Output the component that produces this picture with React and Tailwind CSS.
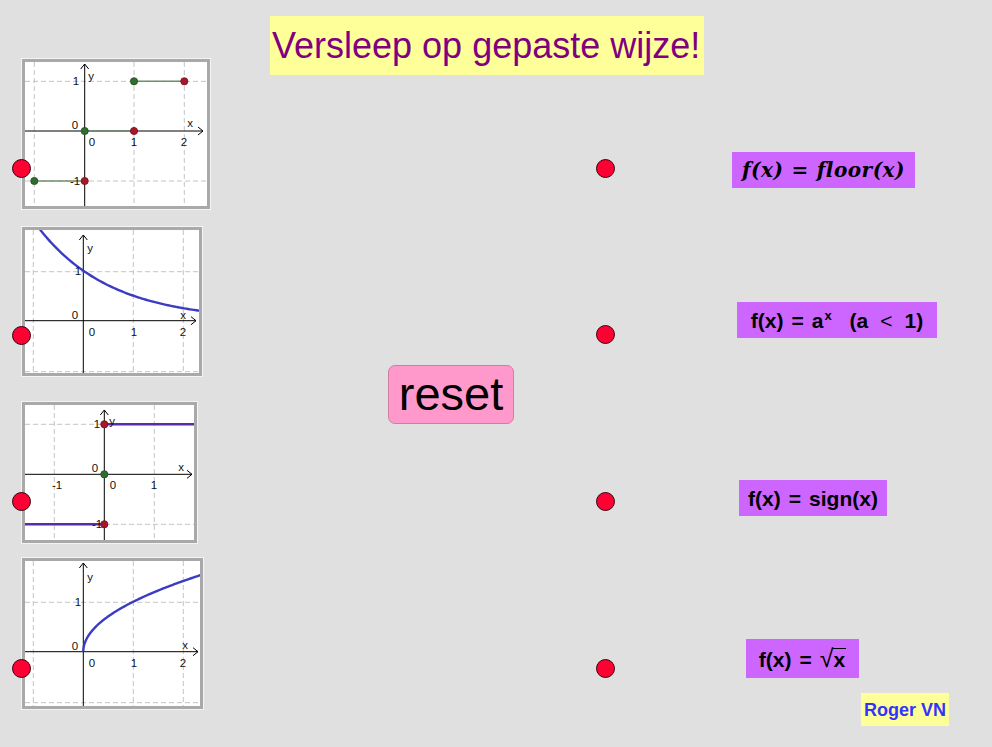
const Graph = ({ x, y, w, h, dotTop, className = '', children }) => (
    <div className={`relative ${className}`}>
        <div
            className="border-[3px] border-[#a9a9a9] bg-white shadow-[0_0_0_1px_#f4f4f4]"
            style={{ width: w, height: h }}
        >
            <svg
                width={w - 6}
                height={h - 6}
                viewBox={`${x + 3} ${y + 3} ${w - 6} ${h - 6}`}
                className="block"
                fontFamily="Liberation Sans, Arial, sans-serif"
                fontSize="11.5"
            >
                {children}
            </svg>
        </div>
        <div className="absolute -left-[10.5px]" style={{ top: dotTop }}>
            <BigDot />
        </div>
    </div>
);

const Grid = ({ xs, ys, x0, x1, y0, y1 }) => (
    <g stroke="#c4c4c4" strokeWidth="1" strokeDasharray="5 3">
        {xs.map((v) => (
            <line key={'v' + v} x1={v} y1={y0} x2={v} y2={y1} />
        ))}
        {ys.map((v) => (
            <line key={'h' + v} x1={x0} y1={v} x2={x1} y2={v} />
        ))}
    </g>
);

const Axes = ({ ox, oy, x0, x1, y0, y1 }) => (
    <g stroke="#000" strokeWidth="1" fill="none">
        <line x1={x0} y1={oy} x2={x1} y2={oy} />
        <line x1={ox} y1={y0} x2={ox} y2={y1} />
        <path d={`M${x1 - 5} ${oy - 4} L${x1} ${oy} L${x1 - 5} ${oy + 4}`} />
        <path d={`M${ox - 4} ${y0 + 5} L${ox} ${y0} L${ox + 4} ${y0 + 5}`} />
    </g>
);

const Dot = ({ cx, cy, c }) => (
    <circle
        cx={cx}
        cy={cy}
        r="3.6"
        fill={c === 'g' ? '#2f6e2f' : '#a8182c'}
        stroke={c === 'g' ? '#1f4a1f' : '#6e0f1c'}
        strokeWidth="0.8"
    />
);

const BigDot = () => <div className="w-[19px] h-[19px] rounded-full bg-[#ff0033] border border-[#3a0010]" />;

const Lbl = ({ x, y, t }) => (
    <text x={x} y={y} fill="#111" textAnchor="middle">
        {t}
    </text>
);

const expPath = () => {
    let d = '';
    for (let px = 40; px <= 200; px += 2) {
        const xv = (px - 83.3) / 50;
        const yv = 320.7 - 50 * Math.pow(0.5, xv);
        d += (d ? ' L' : 'M') + px + ' ' + yv.toFixed(2);
    }
    return d;
};

const sqrtPath = () => {
    let d = 'M83.3 651.7';
    for (let i = 1; i <= 120; i++) {
        const xv = (i / 120) * (i / 120) * 2.35;
        const px = 83.3 + xv * 50;
        const yv = 651.7 - 50 * Math.sqrt(xv);
        d += ' L' + px.toFixed(2) + ' ' + yv.toFixed(2);
    }
    return d;
};

const Formula = ({ className, children }) => (
    <div className={`bg-[#cc66ff] flex items-center justify-center text-black whitespace-nowrap ${className}`}>
        {children}
    </div>
);

const Eq = () => <span className="mx-[8px]">=</span>;

const App = () => {
    return (
        <div className="flex w-[992px] h-[747px] bg-[#e0e0e0] overflow-hidden font-['Liberation_Sans',Arial,sans-serif]">
            {/* graphs column */}
            <div className="w-[230px] shrink-0 flex flex-col pl-[22px] pt-[59px]">
                <Graph x={22} y={59} w={188} h={150} dotTop={99.5}>
                    <Grid xs={[34.3, 134, 184.3]} ys={[81.3, 181]} x0={25} x1={207} y0={62} y1={206} />
                    <Axes ox={84.7} oy={131} x0={25} x1={203} y0={64} y1={206} />
                    <g stroke="#6f8f6f" strokeWidth="1.6">
                        <line x1={134} y1={81.3} x2={184.3} y2={81.3} />
                        <line x1={84.7} y1={131} x2={134} y2={131} />
                        <line x1={34.3} y1={181} x2={84.7} y2={181} />
                    </g>
                    <Dot cx={134} cy={81.3} c="g" />
                    <Dot cx={184.3} cy={81.3} c="r" />
                    <Dot cx={84.7} cy={131} c="g" />
                    <Dot cx={134} cy={131} c="r" />
                    <Dot cx={34.3} cy={181} c="g" />
                    <Dot cx={84.7} cy={181} c="r" />
                    <Lbl x={76} y={85} t="1" />
                    <Lbl x={91} y={80} t="y" />
                    <Lbl x={75} y={129} t="0" />
                    <Lbl x={92} y={146} t="0" />
                    <Lbl x={134} y={146} t="1" />
                    <Lbl x={184} y={146} t="2" />
                    <Lbl x={190} y={127} t="x" />
                    <Lbl x={75} y={185} t="-1" />
                </Graph>

                <Graph x={22} y={227} w={180} h={149} dotTop={98.5} className="mt-[18px]">
                    <Grid xs={[33.3, 133.3, 183.3]} ys={[271.7, 371.7]} x0={25} x1={199} y0={230} y1={373} />
                    <Axes ox={83.3} oy={320.7} x0={25} x1={196} y0={235} y1={373} />
                    <path d={expPath()} stroke="#3b3bc4" strokeWidth="2.4" fill="none" />
                    <Lbl x={78} y={275} t="1" />
                    <Lbl x={90} y={252} t="y" />
                    <Lbl x={75} y={319} t="0" />
                    <Lbl x={92} y={336} t="0" />
                    <Lbl x={134} y={336} t="1" />
                    <Lbl x={183} y={336} t="2" />
                    <Lbl x={183} y={319} t="x" />
                </Graph>

                <Graph x={22} y={402} w={175} h={141} dotTop={89.5} className="mt-[26px]">
                    <Grid xs={[54.3, 154.3]} ys={[424.3, 524.3]} x0={25} x1={194} y0={405} y1={540} />
                    <Axes ox={104.3} oy={474.3} x0={25} x1={192} y0={410} y1={540} />
                    <g stroke="#5a2aa8" strokeWidth="2.4">
                        <line x1={104.3} y1={424.3} x2={194} y2={424.3} />
                        <line x1={25} y1={524.3} x2={104.3} y2={524.3} />
                    </g>
                    <Dot cx={104.3} cy={424.3} c="r" />
                    <Dot cx={104.3} cy={524.3} c="r" />
                    <Dot cx={104.3} cy={474.3} c="g" />
                    <Lbl x={97} y={428} t="1" />
                    <Lbl x={112} y={425} t="y" />
                    <Lbl x={95} y={472} t="0" />
                    <Lbl x={113} y={489} t="0" />
                    <Lbl x={57} y={489} t="-1" />
                    <Lbl x={154} y={489} t="1" />
                    <Lbl x={181} y={471} t="x" />
                    <Lbl x={97} y={528} t="-1" />
                </Graph>

                <Graph x={22} y={558} w={181} h={151} dotTop={100.5} className="mt-[15px]">
                    <Grid xs={[33.3, 133.3, 183.3]} ys={[602.3, 702.7]} x0={25} x1={200} y0={561} y1={706} />
                    <Axes ox={83.3} oy={651.7} x0={25} x1={198} y0={563} y1={706} />
                    <path d={sqrtPath()} stroke="#3b3bc4" strokeWidth="2.4" fill="none" />
                    <Lbl x={78} y={606} t="1" />
                    <Lbl x={90} y={581} t="y" />
                    <Lbl x={75} y={650} t="0" />
                    <Lbl x={92} y={667} t="0" />
                    <Lbl x={134} y={667} t="1" />
                    <Lbl x={183} y={667} t="2" />
                    <Lbl x={185} y={649} t="x" />
                </Graph>
            </div>

            {/* rest of the sheet */}
            <div className="flex flex-col grow">
                <div className="ml-[40px] mt-[16px] w-[434px] h-[59px] bg-[#ffff99] flex items-center pl-[2px]">
                    <span className="text-[36px] leading-none text-[#800080] whitespace-nowrap">Versleep op gepaste wijze!</span>
                </div>

                <div className="flex items-start">
                    <button className="ml-[158px] mt-[290px] w-[126px] h-[59px] bg-[#ff99cc] border border-[#cc7fa3] rounded-[7px] flex items-center justify-center">
                        <span className="text-[47px] leading-none text-black pb-[3px]">reset</span>
                    </button>

                    <div className="ml-[81.5px] mt-[83.5px] flex flex-col gap-[147.7px]">
                        <BigDot />
                        <BigDot />
                        <BigDot />
                        <BigDot />
                    </div>

                    <div className="ml-[117.5px] mt-[77px] flex flex-col items-start">
                        <Formula className="w-[183px] h-[36px]">
                            <span className="font-['DejaVu_Serif',serif] italic font-bold text-[20px] leading-none tracking-[0.5px]">
                                f(x)
                                <span className="mx-[8px] not-italic">=</span>
                                floor(x)
                            </span>
                        </Formula>
                        <Formula className="ml-[5px] mt-[114px] w-[200px] h-[36px]">
                            <span className="font-bold text-[21px] leading-none flex items-start">
                                f(x)
                                <Eq />a<span className="text-[13px] ml-[1px] -mt-[1px]">x</span>
                                <span className="ml-[18px]">(a</span>
                                <span className="mx-[12px] font-normal">&lt;</span>1)
                            </span>
                        </Formula>
                        <Formula className="ml-[7px] mt-[142px] w-[148px] h-[36px]">
                            <span className="font-bold text-[21px] leading-none">
                                f(x)
                                <Eq />
                                sign(x)
                            </span>
                        </Formula>
                        <Formula className="ml-[14px] mt-[123px] w-[113px] h-[39px]">
                            <span className="font-bold text-[21px] leading-none flex items-end">
                                f(x)
                                <Eq />
                                <span className="font-normal text-[25px] leading-[23px]">√</span>
                                <span className="border-t-[1.5px] border-black leading-[21px] pr-[1px]">x</span>
                            </span>
                        </Formula>
                        <div className="ml-[129px] mt-[15px] w-[88px] h-[33px] bg-[#ffff99] flex items-center justify-center">
                            <span className="font-bold text-[18px] leading-none text-[#3333ff] whitespace-nowrap">Roger VN</span>
                        </div>
                    </div>
                </div>
            </div>
        </div>
    );
};

export default App;
